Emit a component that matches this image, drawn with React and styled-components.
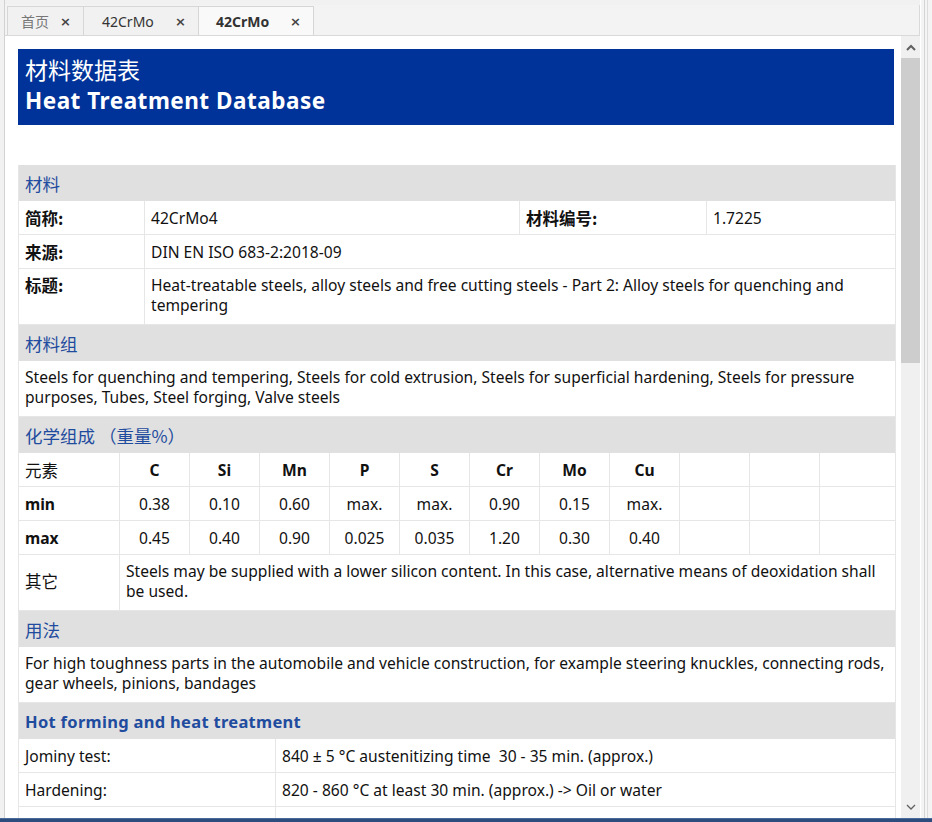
import React from "react";
import styled, { createGlobalStyle } from "styled-components";

const SANS = `"Noto Sans", "Noto Sans CJK SC", sans-serif`;
const CJK = `"Noto Sans CJK SC", "Noto Sans", sans-serif`;
const FS = 15.6;

const Global = createGlobalStyle`
  html, body { margin: 0; padding: 0; background: #f1f1f1; }
  body { font-family: ${SANS}; color: #111; }
`;

const Page = styled.div`
  width: 932px;
  height: 822px;
  display: flex;
  flex-direction: column;
  overflow: hidden;
  background: #f1f1f1;
`;

const Window = styled.div`
  flex: 1;
  min-height: 0;
  display: flex;
`;

const Main = styled.div`
  flex: 1;
  min-width: 0;
  margin-left: 4px;
  border-left: 1px solid #d2d2d2;
  padding-top: 5px;
  display: flex;
  flex-direction: column;
`;

const TabStrip = styled.div`
  height: 30px;
  display: flex;
  align-items: flex-end;
  padding-left: 2px;
  background: #f3f3f3;
  border-bottom: 1px solid #d9d9d9;
  border-right: 1px solid #d9d9d9;
`;

const Tab = styled.div`
  box-sizing: border-box;
  width: ${(p) => p.$w}px;
  height: 29px;
  margin-left: -1px;
  padding-left: ${(p) => p.$pl}px;
  display: flex;
  align-items: center;
  border: 1px solid #d6d6d6;
  border-bottom: none;
  background: ${(p) => (p.$active ? "#f9f9f9" : "#f1f1f1")};
  font-family: ${SANS};
  font-size: 14px;
  font-weight: ${(p) => (p.$active ? 700 : 400)};
  color: ${(p) => (p.$muted ? "#777" : "#333")};
  &:first-child { margin-left: 0; }
`;

const TabLabel = styled.span`
  font-family: ${(p) => (p.$cjk ? CJK : SANS)};
`;

const Close = styled.span`
  margin-left: auto;
  margin-right: ${(p) => p.$mr}px;
  font-family: "DejaVu Sans", sans-serif;
  font-size: 13px;
  font-weight: 700;
  color: #444;
`;

const Pane = styled.div`
  flex: 1;
  min-height: 0;
  display: flex;
  background: #fff;
`;

const Scroll = styled.div`
  flex: 1;
  min-width: 0;
  overflow: hidden;
  padding: 13px 7px 0 13px;
`;

const ScrollBar = styled.div`
  width: 19px;
  display: flex;
  flex-direction: column;
  background: #f0f0f0;
`;

const ArrowBtn = styled.div`
  height: 22px;
  display: flex;
  align-items: center;
  justify-content: center;
  color: #606060;
`;

const Track = styled.div`
  flex: 1;
  display: flex;
  flex-direction: column;
`;

const Thumb = styled.div`
  height: 305px;
  background: #cdcdcd;
`;

const RightEdge = styled.div`
  width: 11px;
  display: flex;
  background: #f4f4f4;
  border-left: 1px solid #ffffff;
`;

const EdgeLine = styled.div`
  width: 1px;
  margin-left: ${(p) => p.$ml}px;
  background: ${(p) => p.$c};
`;

const TaskBar = styled.div`
  height: 3px;
  background: #2c4c7e;
  border-top: 1px solid #4a6a9c;
`;

const Banner = styled.div`
  background: #003399;
  color: #fff;
  padding: 5px 7px 2px;
  height: 69px;
  margin-bottom: 40px;
`;

const BannerCn = styled.div`
  font-family: ${CJK};
  font-size: 23px;
  line-height: 30px;
`;

const BannerEn = styled.div`
  font-family: ${SANS};
  font-weight: 700;
  font-size: 22.5px;
  letter-spacing: 0.5px;
  line-height: 34px;
`;

const Sheet = styled.div`
  width: 876px;
  border-left: 1px solid #e6e6e6;
  border-right: 1px solid #e6e6e6;
`;

const SectionHead = styled.div`
  height: 36px;
  box-sizing: border-box;
  display: flex;
  align-items: center;
  padding: 0 6px;
  background: #e0e0e0;
  color: #1f4c9e;
  font-family: ${(p) => (p.$en ? SANS : CJK)};
  font-weight: ${(p) => (p.$en ? 700 : 400)};
  font-size: ${(p) => (p.$en ? 16.5 : 17.5)}px;
  letter-spacing: ${(p) => (p.$en ? 0.3 : 0)}px;
`;

const Row = styled.div`
  display: grid;
  grid-template-columns: ${(p) => p.$cols};
  border-bottom: 1px solid #e6e6e6;
`;

const Cell = styled.div`
  box-sizing: border-box;
  min-height: ${(p) => (p.$tall ? 55 : 33)}px;
  padding: ${(p) => (p.$tall ? "6px 6px 9px" : "0 6px")};
  display: flex;
  align-items: ${(p) => (p.$tall && !p.$mid ? "flex-start" : "center")};
  justify-content: ${(p) => (p.$center ? "center" : "flex-start")};
  border-left: ${(p) => (p.$first ? "none" : "1px solid #e6e6e6")};
  font-family: ${(p) => (p.$cjk ? CJK : SANS)};
  font-weight: ${(p) => (p.$bold ? 700 : p.$label ? 600 : 400)};
  font-size: ${(p) => (p.$cjk ? 16.5 : FS)}px;
  line-height: 20px;
  color: #111;
  grid-column: ${(p) => p.$span || "auto"};
`;

const Para = styled.div`
  box-sizing: border-box;
  min-height: 55px;
  padding: 6px 6px 9px;
  font-family: ${SANS};
  font-size: ${FS}px;
  line-height: 20px;
  color: #111;
  border-bottom: 1px solid #e6e6e6;
`;

const Chevron = ({ up }) => (
  <svg width="10" height="7" viewBox="0 0 10 7">
    <polyline
      points={up ? "1,6 5,2 9,6" : "1,1 5,5 9,1"}
      fill="none"
      stroke="currentColor"
      strokeWidth={up ? 2 : 1.3}
    />
  </svg>
);

const MAT = "125px 375px 187px 1fr";
const ELEM = "100px repeat(10, 70px) 1fr";
const HOT = "256px 1fr";

const elements = ["C", "Si", "Mn", "P", "S", "Cr", "Mo", "Cu", "", "", ""];
const mins = ["0.38", "0.10", "0.60", "max.", "max.", "0.90", "0.15", "max.", "", "", ""];
const maxs = ["0.45", "0.40", "0.90", "0.025", "0.035", "1.20", "0.30", "0.40", "", "", ""];

export default function App() {
  return (
    <Page>
      <Global />
      <Window>
        <Main>
          <TabStrip>
            <Tab $w={77} $pl={13} $muted>
              <TabLabel $cjk>首页</TabLabel>
              <Close $mr={12}>×</Close>
            </Tab>
            <Tab $w={116} $pl={18}>
              <TabLabel>42CrMo</TabLabel>
              <Close $mr={12}>×</Close>
            </Tab>
            <Tab $w={116} $pl={17} $active>
              <TabLabel>42CrMo</TabLabel>
              <Close $mr={12}>×</Close>
            </Tab>
          </TabStrip>
          <Pane>
            <Scroll>
              <Banner>
                <BannerCn>材料数据表</BannerCn>
                <BannerEn>Heat Treatment Database</BannerEn>
              </Banner>
              <Sheet>
                <SectionHead>材料</SectionHead>
                <Row $cols={MAT}>
                  <Cell $first $cjk $label>简称:</Cell>
                  <Cell>42CrMo4</Cell>
                  <Cell $cjk $label>材料编号:</Cell>
                  <Cell>1.7225</Cell>
                </Row>
                <Row $cols={MAT}>
                  <Cell $first $cjk $label>来源:</Cell>
                  <Cell $span="2 / 5">DIN EN ISO 683-2:2018-09</Cell>
                </Row>
                <Row $cols={MAT}>
                  <Cell $first $cjk $label $tall>标题:</Cell>
                  <Cell $span="2 / 5" $tall>
                    Heat-treatable steels, alloy steels and free cutting steels - Part 2: Alloy steels for quenching and tempering
                  </Cell>
                </Row>
                <SectionHead>材料组</SectionHead>
                <Para>
                  Steels for quenching and tempering, Steels for cold extrusion, Steels for superficial hardening, Steels for pressure purposes, Tubes, Steel forging, Valve steels
                </Para>
                <SectionHead>化学组成 （重量%）</SectionHead>
                <Row $cols={ELEM}>
                  <Cell $first $cjk>元素</Cell>
                  {elements.map((e, i) => (
                    <Cell key={i} $center $bold>{e}</Cell>
                  ))}
                </Row>
                <Row $cols={ELEM}>
                  <Cell $first $bold>min</Cell>
                  {mins.map((e, i) => (
                    <Cell key={i} $center>{e}</Cell>
                  ))}
                </Row>
                <Row $cols={ELEM}>
                  <Cell $first $bold>max</Cell>
                  {maxs.map((e, i) => (
                    <Cell key={i} $center>{e}</Cell>
                  ))}
                </Row>
                <Row $cols={ELEM}>
                  <Cell $first $cjk $tall $mid>其它</Cell>
                  <Cell $span="2 / 13" $tall>
                    Steels may be supplied with a lower silicon content. In this case, alternative means of deoxidation shall be used.
                  </Cell>
                </Row>
                <SectionHead>用法</SectionHead>
                <Para>
                  For high toughness parts in the automobile and vehicle construction, for example steering knuckles, connecting rods, gear wheels, pinions, bandages
                </Para>
                <SectionHead $en>Hot forming and heat treatment</SectionHead>
                <Row $cols={HOT}>
                  <Cell $first>Jominy test:</Cell>
                  <Cell>840 ± 5 °C austenitizing time&nbsp; 30 - 35 min. (approx.)</Cell>
                </Row>
                <Row $cols={HOT}>
                  <Cell $first>Hardening:</Cell>
                  <Cell>820 - 860 °C at least 30 min. (approx.) -&gt; Oil or water</Cell>
                </Row>
                <Row $cols={HOT}>
                  <Cell $first />
                  <Cell />
                </Row>
              </Sheet>
            </Scroll>
            <ScrollBar>
              <ArrowBtn><Chevron up /></ArrowBtn>
              <Track>
                <Thumb />
              </Track>
              <ArrowBtn><Chevron /></ArrowBtn>
            </ScrollBar>
          </Pane>
        </Main>
        <RightEdge>
          <EdgeLine $ml={3} $c="#d4d4d4" />
          <EdgeLine $ml={2} $c="#dcdcdc" />
        </RightEdge>
      </Window>
      <TaskBar />
    </Page>
  );
}
